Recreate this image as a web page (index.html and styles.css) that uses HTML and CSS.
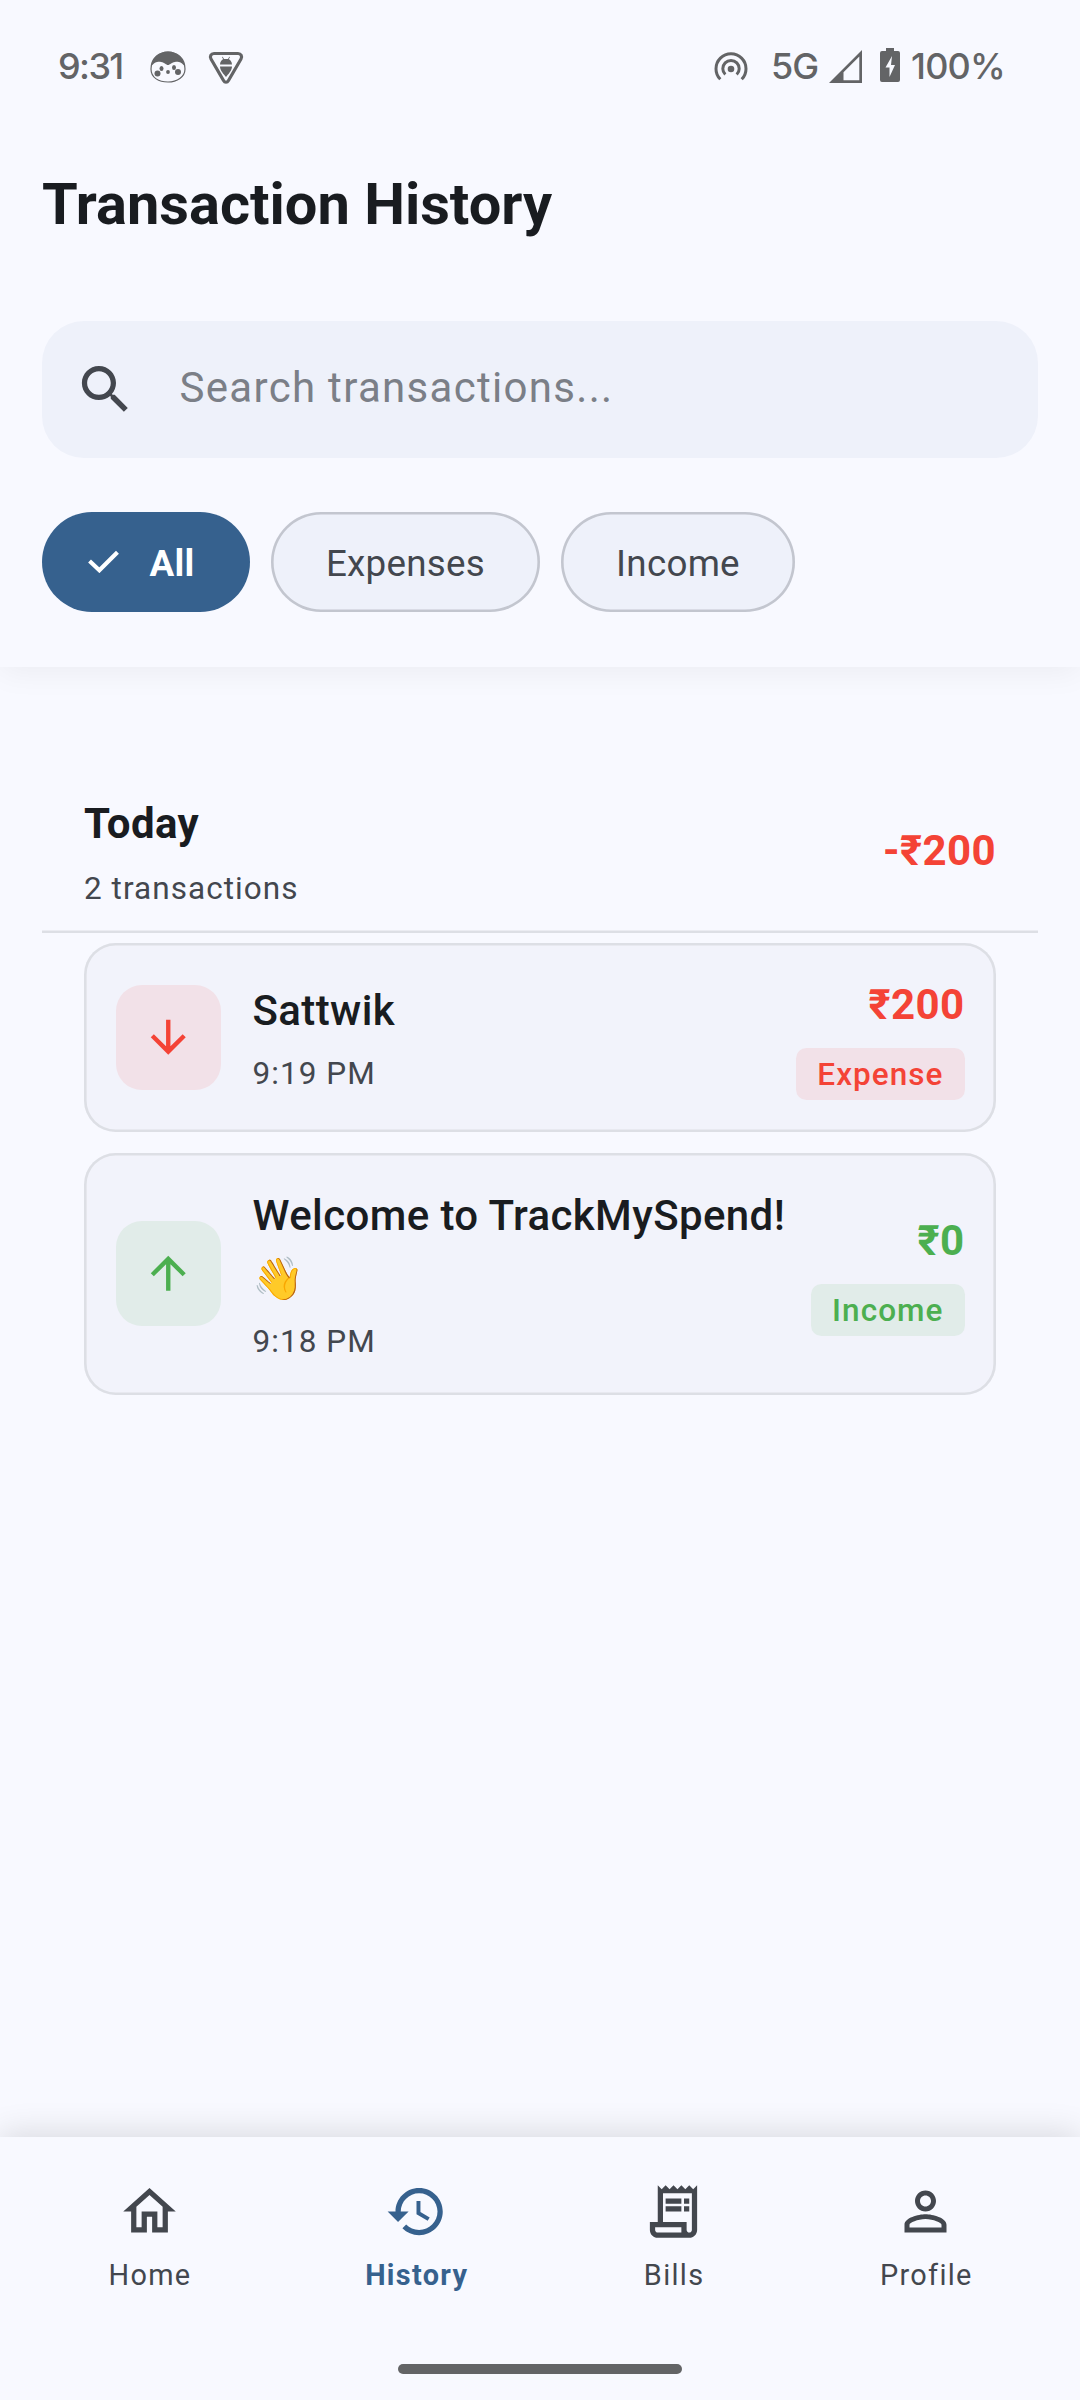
FILE: index.html
```html
<!DOCTYPE html>
<html lang="en">
<head>
<meta charset="utf-8">
<title>Transaction History</title>
<link rel="stylesheet" href="styles.css">
</head>
<body>
<div class="screen">
  <header class="header">
    <div class="status">
      <span class="clock">9:31</span>
      <svg class="st-face" viewBox="0 0 36 32"><path d="M1 18C1 7 9 1 18 1s17 6 17 17c0 8-8 13-17 13S1 27 1 18z" fill="none" stroke="#636466" stroke-width="1.2"/><path d="M1 16C2 7 9 .6 18 .6S34 7 35 16c-3-5-7-5.500-10-5-4 .5-5 3-7 3s-3-2.500-7-3c-3-.5-7 0-10 5z"/><circle cx="7.500" cy="22.500" r="3"/><circle cx="28" cy="21" r="3"/><ellipse cx="11.500" cy="17.500" rx="2" ry="2.600"/><ellipse cx="24" cy="16.500" rx="2" ry="2.600"/><circle cx="18" cy="21" r="1.900"/></svg>
      <svg class="st-shield" viewBox="0 0 36 34"><path d="M6 2.500h24c3 0 4.500 3 3 5.500L20.500 29.500c-1.300 2.300-3.700 2.300-5 0L3 8C1.500 5.500 3 2.500 6 2.500z" fill="none" stroke="#636466" stroke-width="3.200"/><path d="M12 13.500c0-3 2-5 3.200-5.300L14 6l.7-.3L16 8h4l1.300-2.300.7.3-1.200 2.200C22 8.500 24 10.500 24 13.500zM12 15.500h12c0 4-4 8-6 10.500-2-2.500-6-6.500-6-10.500z"/></svg>
      <span class="spacer"></span>
      <svg class="st-cast" viewBox="0 0 34 30"><g fill="none" stroke="#636466" stroke-width="3"><path d="M6.300 27.300A15 15 0 1 1 27.700 27.300"/><path d="M11.300 22.500A8.200 8.200 0 1 1 22.700 22.500"/></g><circle cx="17" cy="17" r="3.300"/></svg>
      <span class="net">5G</span>
      <svg class="st-signal" viewBox="0 0 33 33"><path d="M33 0v33H0zM30.300 6.500L14.500 22.300v8h15.800z" fill-rule="evenodd"/></svg>
      <svg class="st-batt" viewBox="0 0 20 34"><path d="M6 0h8v3h4a2 2 0 0 1 2 2v27a2 2 0 0 1-2 2H2a2 2 0 0 1-2-2V5a2 2 0 0 1 2-2h4z"/><path d="M12 8L5.500 19.500h4V29L15 17h-4z" fill="#f8f9ff"/></svg>
      <span class="pct">100%</span>
    </div>
    <h1 class="title">Transaction History</h1>
    <div class="search">
      <svg class="icon" viewBox="0 0 24 24"><path d="M15.500 14h-.79l-.28-.27C15.410 12.590 16 11.110 16 9.500 16 5.910 13.090 3 9.500 3S3 5.910 3 9.500 5.910 16 9.500 16c1.610 0 3.090-.59 4.230-1.570l.27.28v.79l5 4.990L20.490 19l-4.990-5zm-6 0C7.010 14 5 11.990 5 9.500S7.010 5 9.500 5 14 7.010 14 9.500 11.990 14 9.500 14z"/></svg>
      <span class="placeholder">Search transactions...</span>
    </div>
    <div class="chips">
      <div class="chip chip-on"><svg class="check" viewBox="0 0 30 22"><path d="M1.500 10.500L11 19.500 28.500 2" fill="none" stroke="#fff" stroke-width="4"/></svg>All</div>
      <div class="chip chip-exp">Expenses</div>
      <div class="chip chip-inc">Income</div>
    </div>
  </header>

  <main class="list">
    <div class="day">
      <div>
        <div class="day-name">Today</div>
        <div class="sub">2 transactions</div>
      </div>
      <div class="amount expense">-₹200</div>
    </div>

    <div class="card">
      <div class="tile tile-exp"><svg viewBox="0 0 24 24"><path d="M20 12l-1.410-1.410L13 16.170V4h-2v12.170l-5.580-5.590L4 12l8 8 8-8z"/></svg></div>
      <div class="info">
        <div class="name">Sattwik</div>
        <div class="sub">9:19 PM</div>
      </div>
      <div class="side">
        <div class="amount expense">₹200</div>
        <div class="badge badge-exp">Expense</div>
      </div>
    </div>

    <div class="card">
      <div class="tile tile-inc"><svg viewBox="0 0 24 24"><path d="M4 12l1.410 1.410L11 7.830V20h2V7.830l5.580 5.590L20 12l-8-8-8 8z"/></svg></div>
      <div class="info">
        <div class="name">Welcome to TrackMySpend! <span class="emoji">👋</span></div>
        <div class="sub">9:18 PM</div>
      </div>
      <div class="side">
        <div class="amount income">₹0</div>
        <div class="badge badge-inc">Income</div>
      </div>
    </div>
  </main>

  <nav class="nav">
    <div class="tabs">
      <div class="tab"><svg class="icon" viewBox="0 0 24 24"><path d="M12 5.690l5 4.500V18h-2v-6H9v6H7v-7.810l5-4.500M12 3L2 12h3v8h6v-6h2v6h6v-8h3L12 3z"/></svg><span>Home</span></div>
      <div class="tab tab-on"><svg class="icon" viewBox="0 0 24 24"><path d="M13 3c-4.970 0-9 4.030-9 9H1l3.890 3.890.07.14L9 12H6c0-3.870 3.130-7 7-7s7 3.130 7 7-3.130 7-7 7c-1.930 0-3.680-.79-4.940-2.060l-1.420 1.420C8.270 19.990 10.510 21 13 21c4.970 0 9-4.030 9-9s-4.030-9-9-9zm-1 5v5l4.250 2.520.77-1.280-3.520-2.090V8z"/></svg><span>History</span></div>
      <div class="tab"><svg class="icon" viewBox="0 0 24 24"><path d="M19.500 3.500L18 2l-1.500 1.500L15 2l-1.500 1.500L12 2l-1.500 1.500L9 2 7.500 3.500 6 2v14H3v3c0 1.660 1.340 3 3 3h12c1.660 0 3-1.340 3-3V2l-1.500 1.500zM15 20H6c-.55 0-1-.45-1-1v-1h10v2zm4-1c0 .55-.45 1-1 1s-1-.45-1-1v-3H8V5h11v14z"/><path d="M9 7h6v2H9zM16 7h2v2h-2zM9 10h6v2H9zM16 10h2v2h-2z"/></svg><span>Bills</span></div>
      <div class="tab"><svg class="icon" viewBox="0 0 24 24"><path d="M12 5.900c1.160 0 2.100.94 2.100 2.100s-.94 2.100-2.100 2.100S9.900 9.160 9.900 8s.94-2.100 2.100-2.100m0 9c2.970 0 6.100 1.460 6.100 2.100v1.100H5.900V17c0-.64 3.130-2.100 6.100-2.100M12 4C9.790 4 8 5.790 8 8s1.790 4 4 4 4-1.790 4-4-1.790-4-4-4zm0 9c-2.670 0-8 1.340-8 4v3h16v-3c0-2.660-5.330-4-8-4z"/></svg><span>Profile</span></div>
    </div>
    <div class="handle"></div>
  </nav>
</div>
</body>
</html>
```
FILE: styles.css
```css
* { box-sizing: border-box; }
body { margin: 0; background: #f8f9ff; }
.screen {
  width: 1080px;
  height: 2400px;
  display: flex;
  flex-direction: column;
  overflow: hidden;
  background: #f8f9ff;
  color: #191c20;
  font-family: Roboto, "Noto Sans", sans-serif;
}
svg { display: block; flex: none; fill: currentColor; }
.icon { width: 63px; height: 63px; }

/* Header */
.header {
  height: 667px;
  padding: 0 42px;
  background: #f8f9ff;
  box-shadow: 0 5px 30px rgba(0, 0, 0, .055);
}
.status {
  height: 132px;
  margin: 0 -42px;
  padding: 0 77px 0 58px;
  display: flex;
  align-items: center;
  color: #636466;
  font-family: Inter, sans-serif;
  font-size: 36px;
  font-weight: 500;
}
.clock { width: 92px; margin-top: -1px; letter-spacing: -1.6px; }
.st-face { width: 36px; height: 32px; margin-top: 2px; }
.st-shield { width: 36px; height: 34px; margin: 4px 0 0 22px; }
.spacer { flex: 1; }
.st-cast { width: 34px; height: 30px; margin-top: 1px; }
.net { width: 58px; margin: -1px 0 0 23px; letter-spacing: -1px; }
.st-signal { width: 33px; height: 33px; }
.st-batt { width: 20px; height: 34px; margin: -2px 11px 0 18px; }
.pct { width: 92px; margin-top: -1px; letter-spacing: -.8px; white-space: nowrap; }
.title {
  margin: 35.5px 0 0;
  font-size: 57.75px;
  line-height: 73.5px;
  font-weight: 700;
}
.search {
  height: 136.5px;
  margin-top: 80px;
  padding-left: 31.5px;
  display: flex;
  align-items: center;
  border-radius: 42px;
  background: #eef1fa;
  color: #43474e;
}
.placeholder {
  margin: -3px 0 0 43px;
  font-size: 42px;
  letter-spacing: 1.3125px;
  color: #7b7f87;
}
.chips { display: flex; gap: 21px; margin-top: 54.5px; }
.chip {
  height: 100px;
  padding-top: 2px;
  display: flex;
  align-items: center;
  justify-content: center;
  border-radius: 50px;
  background: #eef1fa;
  box-shadow: inset 0 0 0 2.6px #c3c6cf;
  color: #43474e;
  font-size: 36.75px;
  letter-spacing: .26px;
}
.chip-on {
  width: 208px;
  padding-right: 10px;
  gap: 31px;
  background: #36618e;
  box-shadow: none;
  color: #fff;
  font-weight: 700;
}
.chip-exp { width: 269px; }
.chip-inc { width: 234px; }
.check { width: 31px; height: 23px; margin-top: -4px; }

/* Transactions */
.list { flex: 1; padding: 123.5px 42px 0; }
.day {
  padding: 0 42px 21px;
  display: flex;
  justify-content: space-between;
  align-items: center;
  box-shadow: inset 0 -2.6px 0 #dddfe5;
  height: 142px;
}
.day-name { font-size: 42px; line-height: 63px; font-weight: 700; letter-spacing: .39px; }
.sub {
  margin-top: 11.5px;
  font-size: 31.5px;
  line-height: 42px;
  letter-spacing: 1.05px;
  color: #43474e;
}
.day .sub { margin-top: 13px; }
.amount { font-size: 42px; line-height: 63px; font-weight: 700; letter-spacing: .39px; }
.day .amount { margin-top: -2px; }
.expense { color: #f44336; }
.income { color: #4caf50; }
.card {
  margin: 10.5px 42px 0;
  padding: 29.5px 31.5px 31.5px;
  display: flex;
  align-items: center;
  border-radius: 31.5px;
  background: #f2f3fb;
  box-shadow: inset 0 0 0 2.6px #dddfe5;
}
.card + .card { margin-top: 21px; }
.tile {
  width: 105px;
  height: 105px;
  margin-top: 2px;
  display: grid;
  place-items: center;
  flex: none;
  border-radius: 26px;
}
.tile svg { width: 52.5px; height: 52.5px; }
.tile-exp { background: #f2e1e8; color: #f44336; }
.tile-inc { background: #e1ece9; color: #4caf50; }
.info { flex: 1; margin: 1.5px 0 0 32px; }
.name { font-size: 42px; line-height: 63px; font-weight: 500; letter-spacing: .39px; }
.emoji { font-family: "Noto Color Emoji", sans-serif; }
.side { display: flex; flex-direction: column; align-items: flex-end; gap: 12px; }
.badge {
  padding: 6.25px 21px 4.25px;
  border-radius: 10.5px;
  font-size: 31.5px;
  line-height: 42px;
  font-weight: 500;
  letter-spacing: 1.05px;
}
.badge-exp { background: #f2e1e8; color: #f44336; }
.badge-inc { background: #e1ece9; color: #4caf50; }

/* Bottom navigation */
.nav {
  height: 263px;
  padding: 42.5px 21px 0;
  background: #f8f9ff;
  box-shadow: 0 -5px 30px rgba(0, 0, 0, .12);
}
.tabs { display: flex; justify-content: space-around; }
.tab {
  display: flex;
  flex-direction: column;
  align-items: center;
  gap: 11px;
  color: #43474e;
  font-size: 28.875px;
  line-height: 42px;
  letter-spacing: 1.3125px;
}
.tab span { margin-right: -1.3px; }
.tab-on { color: #36618e; font-weight: 700; }
.handle { width: 284px; height: 10px; margin: 68px auto 0; border-radius: 5px; background: #636466; }
```
